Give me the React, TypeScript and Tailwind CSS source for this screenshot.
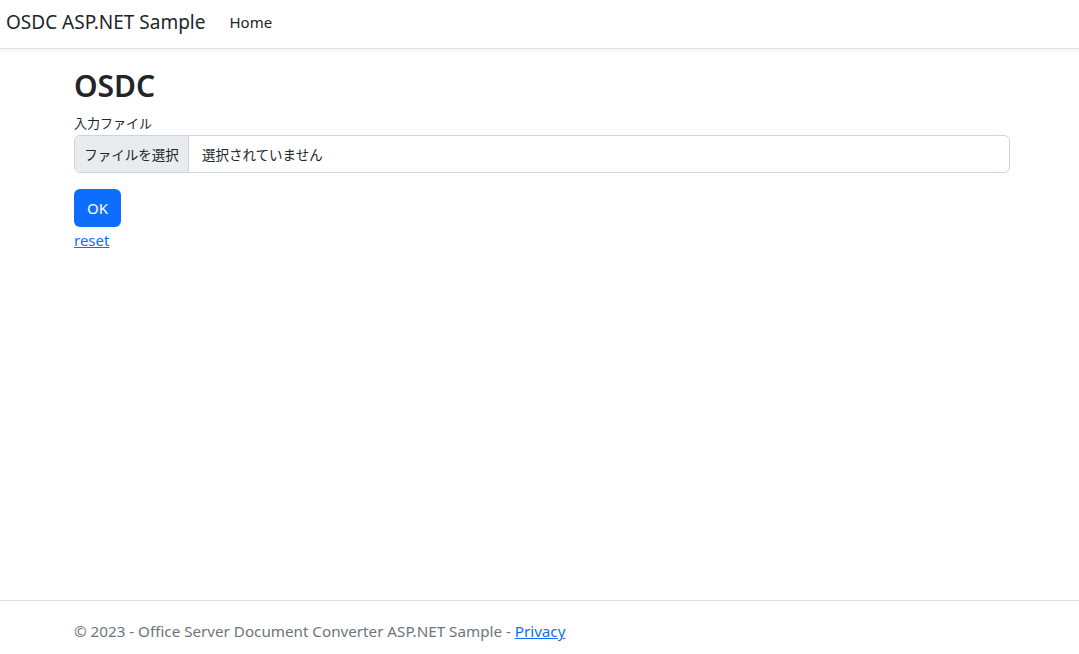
import React from "react";

export default function App() {
  return (
    <div className="min-h-[654px] flex flex-col bg-white text-[#212529] font-['Noto_Sans','Noto_Sans_CJK_JP',sans-serif]">
      <header className="h-[49px] flex items-center border-b border-[#dee2e6] shadow-[0_2px_6px_rgba(0,0,0,0.05)] px-[6px] pb-[4px]">
        <span className="text-[19px] text-[#212529] leading-none">OSDC ASP.NET Sample</span>
        <nav className="ml-[24px]">
          <a className="text-[15px] text-[#212529] leading-none">Home</a>
        </nav>
      </header>
      <main className="flex-1 w-[936px] ml-[74px] pt-[20px]">
        <h1 className="text-[30px] font-semibold leading-[34px] mb-[11px]">OSDC</h1>
        <label className="block text-[13px] leading-[18px] mb-[3px] text-[#212529] font-['Noto_Sans_CJK_JP',sans-serif]">入力ファイル</label>
        <div className="flex h-[38px] border border-[#ced4da] rounded-[6px] overflow-hidden text-[13.5px] font-['Noto_Sans_CJK_JP',sans-serif]">
          <div className="w-[114px] flex items-center justify-center bg-[#e9ecef] border-r border-[#ced4da]">ファイルを選択</div>
          <div className="flex items-center pl-[13px]">選択されていません</div>
        </div>
        <button className="mt-[16px] h-[38px] w-[47px] bg-[#0d6efd] text-white rounded-[6px] text-[15px] flex items-center justify-center">OK</button>
        <a className="block mt-[3px] text-[15px] leading-[20px] text-[#0d6efd] underline">reset</a>
      </main>
      <footer className="h-[54px] border-t border-[#dee2e6] flex items-center pt-[8px]">
        <div className="ml-[74px] text-[15.2px] text-[#6c757d]">
          © 2023 - Office Server Document Converter ASP.NET Sample - <a className="text-[#0d6efd] underline">Privacy</a>
        </div>
      </footer>
    </div>
  );
}
